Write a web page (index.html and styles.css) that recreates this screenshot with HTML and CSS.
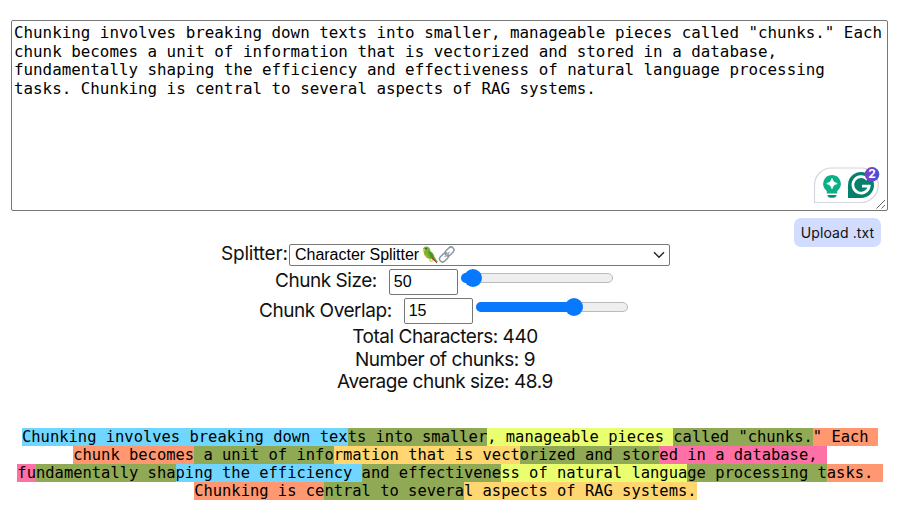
FILE: index.html
```html
<!DOCTYPE html>
<html lang="en">
<head>
<meta charset="utf-8">
<title>Chunk visualizer</title>
<link rel="stylesheet" href="styles.css">
</head>
<body>
<main class="page">
  <div class="editor">
    <textarea class="source" spellcheck="false">Chunking involves breaking down texts into smaller, manageable pieces called "chunks." Each chunk becomes a unit of information that is vectorized and stored in a database, fundamentally shaping the efficiency and effectiveness of natural language processing tasks. Chunking is central to several aspects of RAG systems.</textarea>
    <svg class="assistant" width="80" height="52" viewBox="0 0 80 52">
      <defs><linearGradient id="badge" x1="0" x2="1"><stop offset="0" stop-color="#8a3fc4"/><stop offset="1" stop-color="#3f50d8"/></linearGradient></defs>
      <path d="M4.500 40.500V23A17 17 0 0 1 21.500 6H51A17.200 17.200 0 0 1 51 40.500Z" fill="#fff" stroke="#d3d5df" stroke-width="1.200"/>
      <path d="M22 13a8.800 8.800 0 0 0-5.200 15.900V31.500h10.400v-2.600A8.800 8.800 0 0 0 22 13Z" fill="#0cae88"/>
      <path d="M22 16.500Q22.800 20.800 27.200 21.600 22.800 22.400 22 26.700 21.200 22.400 16.800 21.600 21.200 20.800 22 16.500Z" fill="#fff" stroke="#fff" stroke-width=".8"/>
      <path d="M17.500 33h9c0 2-1.700 2.800-4.500 2.800S17.500 35 17.500 33Z" fill="#0b8f74"/>
      <path d="M51 10a13 13 0 0 0-13 13v13h13a13 13 0 0 0 0-26Z" fill="#04806c"/>
      <path d="M57.300 17.500A8.200 8.200 0 1 0 59.200 24.200H52" fill="none" stroke="#fff" stroke-width="2.700"/>
      <circle cx="62" cy="12.300" r="7.300" fill="url(#badge)"/>
      <text class="badge-count" x="62" y="16.200">2</text>
      <path d="M66.500 46.500L75 38M71.500 46.500L75 43" stroke="#666" stroke-width="1"/>
    </svg>
  </div>
  <div class="upload-row"><button class="upload">Upload .txt</button></div>
  <section class="controls">
    <div class="row splitter"><span class="label">Splitter:</span>
      <div class="select"><span class="option">Character Splitter</span>
        <svg width="34" height="20" viewBox="0 0 34 20">
          <path d="M1 5Q1 1 5 1.500Q8 2 8.500 6Q12 8 12.500 12L16 17 14 17.500 9.500 14Q3 14 2 8Z" fill="#72b52c"/>
          <path d="M6 6Q10 7 12 12L14 16 8 12Z" fill="#4c9428"/>
          <path d="M1 4Q0 6 2 7L3.500 4Z" fill="#d6c58c"/>
          <circle cx="4" cy="3.800" r=".7" fill="#222"/>
          <path d="M2 9l3 3M8 14v2h3" fill="none" stroke="#e4b22c" stroke-width="1.200"/>
          <path d="M10 13l5 5" stroke="#99372f"/>
          <g fill="none" stroke="#8c96a2" stroke-width="1.500"><rect x="17" y="9.500" width="10" height="6" rx="3" transform="rotate(-45 22 12.500)"/><rect x="22.500" y="3.500" width="10" height="6" rx="3" transform="rotate(-45 27.500 6.500)"/></g>
          <path d="M22.500 12l5-5" stroke="#a9b2bd" stroke-width="1.600"/>
        </svg>
        <svg class="chevron" width="12" height="8" viewBox="0 0 12 8"><path d="M1 1.200l5 5 5-5" fill="none" stroke="#222" stroke-width="1.400"/></svg>
      </div>
    </div>
    <div class="row size"><span class="label">Chunk Size:</span><input class="number" value="50"><div class="slider low"><i class="fill"></i><i class="thumb"></i></div></div>
    <div class="row overlap"><span class="label">Chunk Overlap:</span><input class="number" value="15"><div class="slider mid"><i class="fill"></i><i class="thumb"></i></div></div>
    <div class="stats"><div>Total Characters: 440</div><div>Number of chunks: 9</div><div>Average chunk size: 48.9</div></div>
  </section>
  <section class="chunks">
    <div class="line"><span class="blue">Chunking involves breaking down tex</span><span class="green">ts into smaller</span><span class="lime">, manageable pieces </span><span class="green">called "chunks.</span><span class="orange">" Each </span></div>
    <div class="line"><span class="orange">chunk becomes</span><span class="green"> a unit of info</span><span class="amber">rmation that is vect</span><span class="green">orized and stor</span><span class="pink">ed in a database, </span></div>
    <div class="line"><span class="pink">fu</span><span class="green">ndamentally sha</span><span class="blue">ping the efficiency </span><span class="green">and effectivene</span><span class="lime">ss of natural langua</span><span class="green">ge processing t</span><span class="orange">asks. </span></div>
    <div class="line"><span class="orange">Chunking is ce</span><span class="green">ntral to severa</span><span class="amber">l aspects of RAG systems.</span><span> </span></div>
  </section>
</main>
</body>
</html>
```
FILE: styles.css
```css
* { box-sizing: border-box; }
body { margin: 0; background: #fff; color: #111; font: 19px/22.5px Inter, sans-serif; letter-spacing: -.46px; }
.page { width: 906px; height: 524px; padding: 20px 0 0 11px; overflow: hidden; }
.editor { position: relative; width: 877px; height: 191px; }
.source { display: block; width: 877px; height: 191px; margin: 0; padding: 3px 2px; border: 1px solid #777; border-radius: 2px; resize: none; outline: 0; overflow: hidden; background: #fff; color: #000; font: 15.85px/18.5px "DejaVu Sans Mono", monospace; letter-spacing: 0; }
.assistant { position: absolute; right: -2px; bottom: -3px; }
.badge-count { fill: #fff; font: bold 12px Inter, sans-serif; letter-spacing: 0; text-anchor: middle; }
.upload-row { display: flex; justify-content: flex-end; width: 870px; padding-top: 7px; }
.upload { width: 87px; height: 29px; padding: 0; border: 0; border-radius: 7px; background: #d2dcff; color: #111; font: 14px Inter, sans-serif; letter-spacing: .1px; }
.controls { width: 868px; margin-top: -5px; }
.row { display: flex; align-items: center; }
.label { white-space: nowrap; }
.splitter { padding-left: 210px; height: 25px; }
.splitter .label { letter-spacing: -.2px; }
.select { display: flex; align-items: center; width: 381px; height: 22px; margin-left: auto; margin-right: 209px; padding: 0 4px 0 5px; border: 1px solid #777; border-radius: 2px; color: #000; font: 16px "Liberation Sans", sans-serif; letter-spacing: -.02px; flex: none; }
.select svg { margin-left: 3px; flex: none; }
.option { white-space: nowrap; }
.select .chevron { margin-left: auto; }
.size { padding-left: 264px; height: 29px; }
.overlap { padding-left: 248px; height: 30px; }
.number { width: 69px; height: 26px; margin-left: 12px; padding: 1px 4px; border: 1px solid #777; border-radius: 2px; outline: 0; color: #000; font: 16px "Liberation Sans", sans-serif; letter-spacing: 0; }
.slider { position: relative; width: 152px; height: 10px; margin: -8px 0 0 3px; border: 1px solid #bbb; border-radius: 5px; background: #eee; }
.fill { position: absolute; left: -1px; top: -1px; height: 10px; border-radius: 5px; background: #0878ff; }
.thumb { position: absolute; top: -5px; width: 18px; height: 18px; border-radius: 50%; background: #0878ff; }
.low .fill { width: 12px; }
.low .thumb { left: 2px; }
.mid .fill { width: 98px; }
.mid .thumb { left: 88px; }
.stats { text-align: center; }
.chunks { width: 878px; margin-top: 34px; color: #000; font: 15.46px/18px "DejaVu Sans Mono", monospace; letter-spacing: 0; }
.line { display: flex; justify-content: center; height: 18px; white-space: pre; }
.blue { background: #70d6ff; }
.green { background: #90a955; }
.lime { background: #e9ff70; }
.orange { background: #ff9770; }
.amber { background: #ffd670; }
.pink { background: #ff70a6; }
```
